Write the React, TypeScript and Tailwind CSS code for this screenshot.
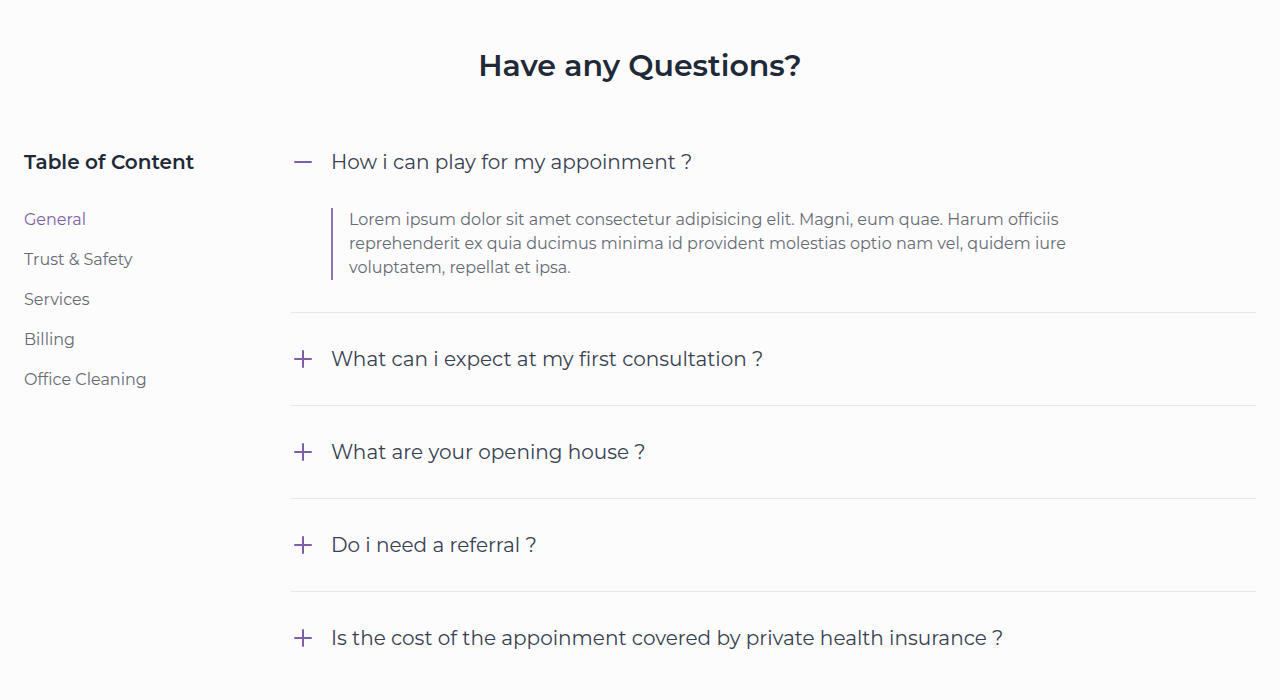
const topics = ['General', 'Trust & Safety', 'Services', 'Billing', 'Office Cleaning'];

const questions = [
  {
    title: 'How i can play for my appoinment ?',
    answer:
      'Lorem ipsum dolor sit amet consectetur adipisicing elit. Magni, eum quae. Harum officiis reprehenderit ex quia ducimus minima id provident molestias optio nam vel, quidem iure voluptatem, repellat et ipsa.',
  },
  { title: 'What can i expect at my first consultation ?' },
  { title: 'What are your opening house ?' },
  { title: 'Do i need a referral ?' },
  { title: 'Is the cost of the appoinment covered by private health insurance ?' },
];

function ToggleIcon({ open }: { open: boolean }) {
  return (
    <svg
      className="h-6 w-6 shrink-0 text-[#805ea8]"
      fill="none"
      viewBox="0 0 24 24"
      stroke="currentColor"
      strokeWidth={2}
      strokeLinecap="round"
      strokeLinejoin="round"
      aria-hidden="true"
    >
      <path d={open ? 'M20 12H4' : 'M12 4v16m8-8H4'} />
    </svg>
  );
}

export default function App() {
  return (
    <section className="min-h-screen bg-[#fcfcfc] font-['Montserrat','Noto_Sans',sans-serif]">
      <div className="px-6 py-12">
        <h1 className="text-center text-3xl font-semibold text-[#1f2937]">Have any Questions?</h1>
        <div className="mt-16 flex">
          <nav className="w-[267px] shrink-0" aria-label="Table of Content">
            <h2 className="text-xl font-semibold text-[#1f2937]">Table of Content</h2>
            <ul className="mt-8 space-y-4">
              {topics.map((topic, i) => (
                <li key={topic}>
                  <a href="#" className={i === 0 ? 'text-[#805ea8]' : 'text-[#666b75]'}>
                    {topic}
                  </a>
                </li>
              ))}
            </ul>
          </nav>
          <div className="min-w-0 flex-1 divide-y divide-gray-200">
            {questions.map((q, i) => (
              <div key={q.title} className={i === 0 ? 'pb-8' : 'py-8'}>
                <button type="button" aria-expanded={Boolean(q.answer)} className="flex items-center gap-4">
                  <ToggleIcon open={Boolean(q.answer)} />
                  <span className="text-left text-xl text-[#374151]">{q.title}</span>
                </button>
                {q.answer && (
                  <div className="mt-8 ml-10 flex">
                    <span className="w-0.5 shrink-0 bg-[#8f72bb]" />
                    <p className="max-w-3xl px-4 text-[#666b75]">{q.answer}</p>
                  </div>
                )}
              </div>
            ))}
          </div>
        </div>
      </div>
    </section>
  );
}
